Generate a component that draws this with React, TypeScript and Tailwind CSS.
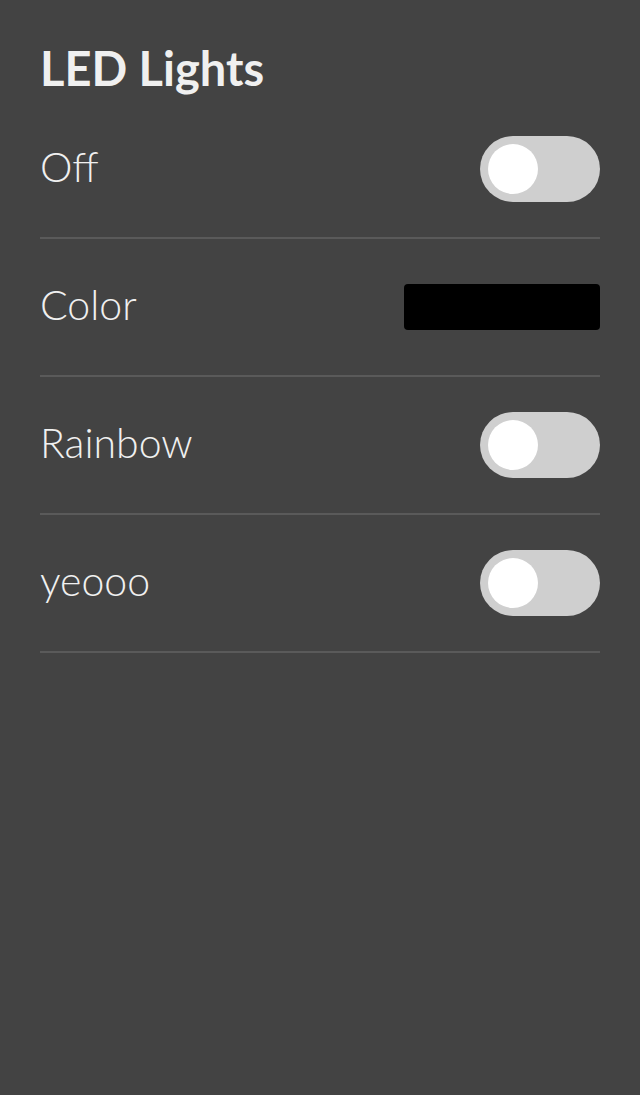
import React from "react";

function Toggle() {
  return (
    <div className="w-[120px] h-[66px] rounded-full bg-[#cfcfcf] flex items-center px-[8px]">
      <div className="w-[50px] h-[50px] rounded-full bg-white" />
    </div>
  );
}

function Row({ label, children }: { label: string; children: React.ReactNode }) {
  return (
    <div className="h-[138px] border-b-2 border-[#5a5a5a] flex items-center justify-between">
      <span className="text-[41px] leading-none text-[#f0f0f0] font-light pb-[5px]">{label}</span>
      {children}
    </div>
  );
}

export default function App() {
  return (
    <div
      className="w-[640px] h-[1095px] bg-[#434343] px-[40px]"
      style={{ fontFamily: "Lato, 'Noto Sans', sans-serif" }}
    >
      <div className="h-[101px] flex items-start pt-[45px]">
        <h1 className="text-[47px] leading-none font-bold text-[#f0f0f0]">LED Lights</h1>
      </div>
      <Row label="Off">
        <Toggle />
      </Row>
      <Row label="Color">
        <div className="w-[196px] h-[46px] bg-black rounded-[4px]" />
      </Row>
      <Row label="Rainbow">
        <Toggle />
      </Row>
      <Row label="yeooo">
        <Toggle />
      </Row>
    </div>
  );
}
